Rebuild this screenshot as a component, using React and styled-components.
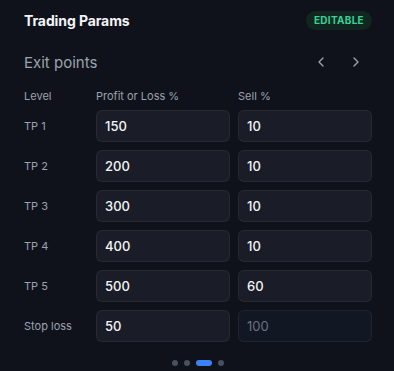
import { useState } from 'react'
import styled, { createGlobalStyle } from 'styled-components'

/* ── Tokens ── */
const T = {
  bg: '#0f121b',
  input: '#1a1d27',
  inputOff: '#121724',
  border: 'rgba(255,255,255,0.06)',
  t1: '#f3f4f6',
  t2: '#9ca3af',
  t3: '#6b7280',
  green: '#34d399',
  greenBg: '#10261f',
  accent: '#3b82f6',
  dot: '#4b505e',
}

const Global = createGlobalStyle`
  html, body { margin: 0; padding: 0; background: ${T.bg}; }
  body { font-family: Inter, "Noto Sans", sans-serif; -webkit-font-smoothing: antialiased; }
`

/* ── Styled Components ── */
const Panel = styled.div`
  width: 394px;
  height: 371px;
  box-sizing: border-box;
  padding: 10px 22px 0 24px;
  background: ${T.bg};
  display: flex;
  flex-direction: column;
`

const Header = styled.div`
  display: flex;
  align-items: center;
  justify-content: space-between;
  height: 20px;
`

const Title = styled.div`
  font-size: 14px;
  font-weight: 700;
  color: ${T.t1};
  letter-spacing: -0.1px;
`

const Badge = styled.div`
  height: 19px;
  padding: 0 8px;
  border-radius: 10px;
  background: ${T.greenBg};
  color: ${T.green};
  font-size: 10px;
  font-weight: 700;
  letter-spacing: 0.3px;
  display: flex;
  align-items: center;
`

const SectionRow = styled.div`
  display: flex;
  align-items: center;
  justify-content: space-between;
  margin-top: 21px;
  height: 22px;
`

const SectionTitle = styled.div`
  font-size: 15px;
  color: ${T.t2};
`

const Arrows = styled.div`
  display: flex;
  gap: 19px;
  margin-right: 8px;
`

const ArrowBtn = styled.button`
  width: 16px;
  height: 18px;
  padding: 0;
  border: 0;
  background: none;
  color: ${T.t2};
  display: flex;
  align-items: center;
  justify-content: center;
  cursor: pointer;
`

const Grid = styled.div`
  display: grid;
  grid-template-columns: 64px 1fr 1fr;
  column-gap: 8px;
  row-gap: 8px;
  align-items: center;
  margin-top: 16px;
`

const ColHead = styled.div`
  font-size: 11px;
  color: ${T.t2};
  height: 14px;
  line-height: 14px;
  margin-bottom: -1px;
`

const Label = styled.div`
  font-size: 11px;
  color: ${T.t2};
`

const Field = styled.input`
  box-sizing: border-box;
  width: 100%;
  height: 32px;
  border-radius: 6px;
  border: 1px solid ${T.border};
  background: ${({ disabled }) => (disabled ? T.inputOff : T.input)};
  color: ${({ disabled }) => (disabled ? T.t3 : T.t1)};
  font-family: inherit;
  font-size: 13px;
  font-weight: ${({ disabled }) => (disabled ? 400 : 500)};
  padding: 0 8px;
  outline: none;
  &:focus { border-color: ${T.accent}; }
`

const Dots = styled.div`
  display: flex;
  justify-content: center;
  gap: 6px;
  margin-top: 18px;
`

const Dot = styled.span`
  width: ${({ active }) => (active ? '16px' : '6px')};
  height: 6px;
  border-radius: 3px;
  background: ${({ active }) => (active ? T.accent : T.dot)};
`

const Chevron = ({ dir }) => (
  <svg width="18" height="18" viewBox="0 0 24 24" fill="none" stroke="currentColor" strokeWidth="2" strokeLinecap="round" strokeLinejoin="round">
    {dir === 'left' ? <path d="M15 18l-6-6 6-6" /> : <path d="M9 18l6-6-6-6" />}
  </svg>
)

const ROWS = [
  { level: 'TP 1', pnl: '150', sell: '10' },
  { level: 'TP 2', pnl: '200', sell: '10' },
  { level: 'TP 3', pnl: '300', sell: '10' },
  { level: 'TP 4', pnl: '400', sell: '10' },
  { level: 'TP 5', pnl: '500', sell: '60' },
  { level: 'Stop loss', pnl: '50', sell: '100', locked: true },
]

export default function App() {
  const [rows, setRows] = useState(ROWS)

  const update = (i, key, val) =>
    setRows((r) => r.map((row, j) => (j === i ? { ...row, [key]: val } : row)))

  return (
    <>
      <Global />
      <Panel>
        <Header>
          <Title>Trading Params</Title>
          <Badge>EDITABLE</Badge>
        </Header>

        <SectionRow>
          <SectionTitle>Exit points</SectionTitle>
          <Arrows>
            <ArrowBtn type="button"><Chevron dir="left" /></ArrowBtn>
            <ArrowBtn type="button"><Chevron dir="right" /></ArrowBtn>
          </Arrows>
        </SectionRow>

        <Grid>
          <ColHead>Level</ColHead>
          <ColHead>Profit or Loss %</ColHead>
          <ColHead>Sell %</ColHead>
          {rows.map((row, i) => (
            <Row key={row.level} row={row} onChange={(k, v) => update(i, k, v)} />
          ))}
        </Grid>

        <Dots>
          <Dot />
          <Dot />
          <Dot active={1} />
          <Dot />
        </Dots>
      </Panel>
    </>
  )
}

function Row({ row, onChange }) {
  return (
    <>
      <Label>{row.level}</Label>
      <Field value={row.pnl} onChange={(e) => onChange('pnl', e.target.value)} />
      <Field value={row.sell} disabled={row.locked} onChange={(e) => onChange('sell', e.target.value)} />
    </>
  )
}
